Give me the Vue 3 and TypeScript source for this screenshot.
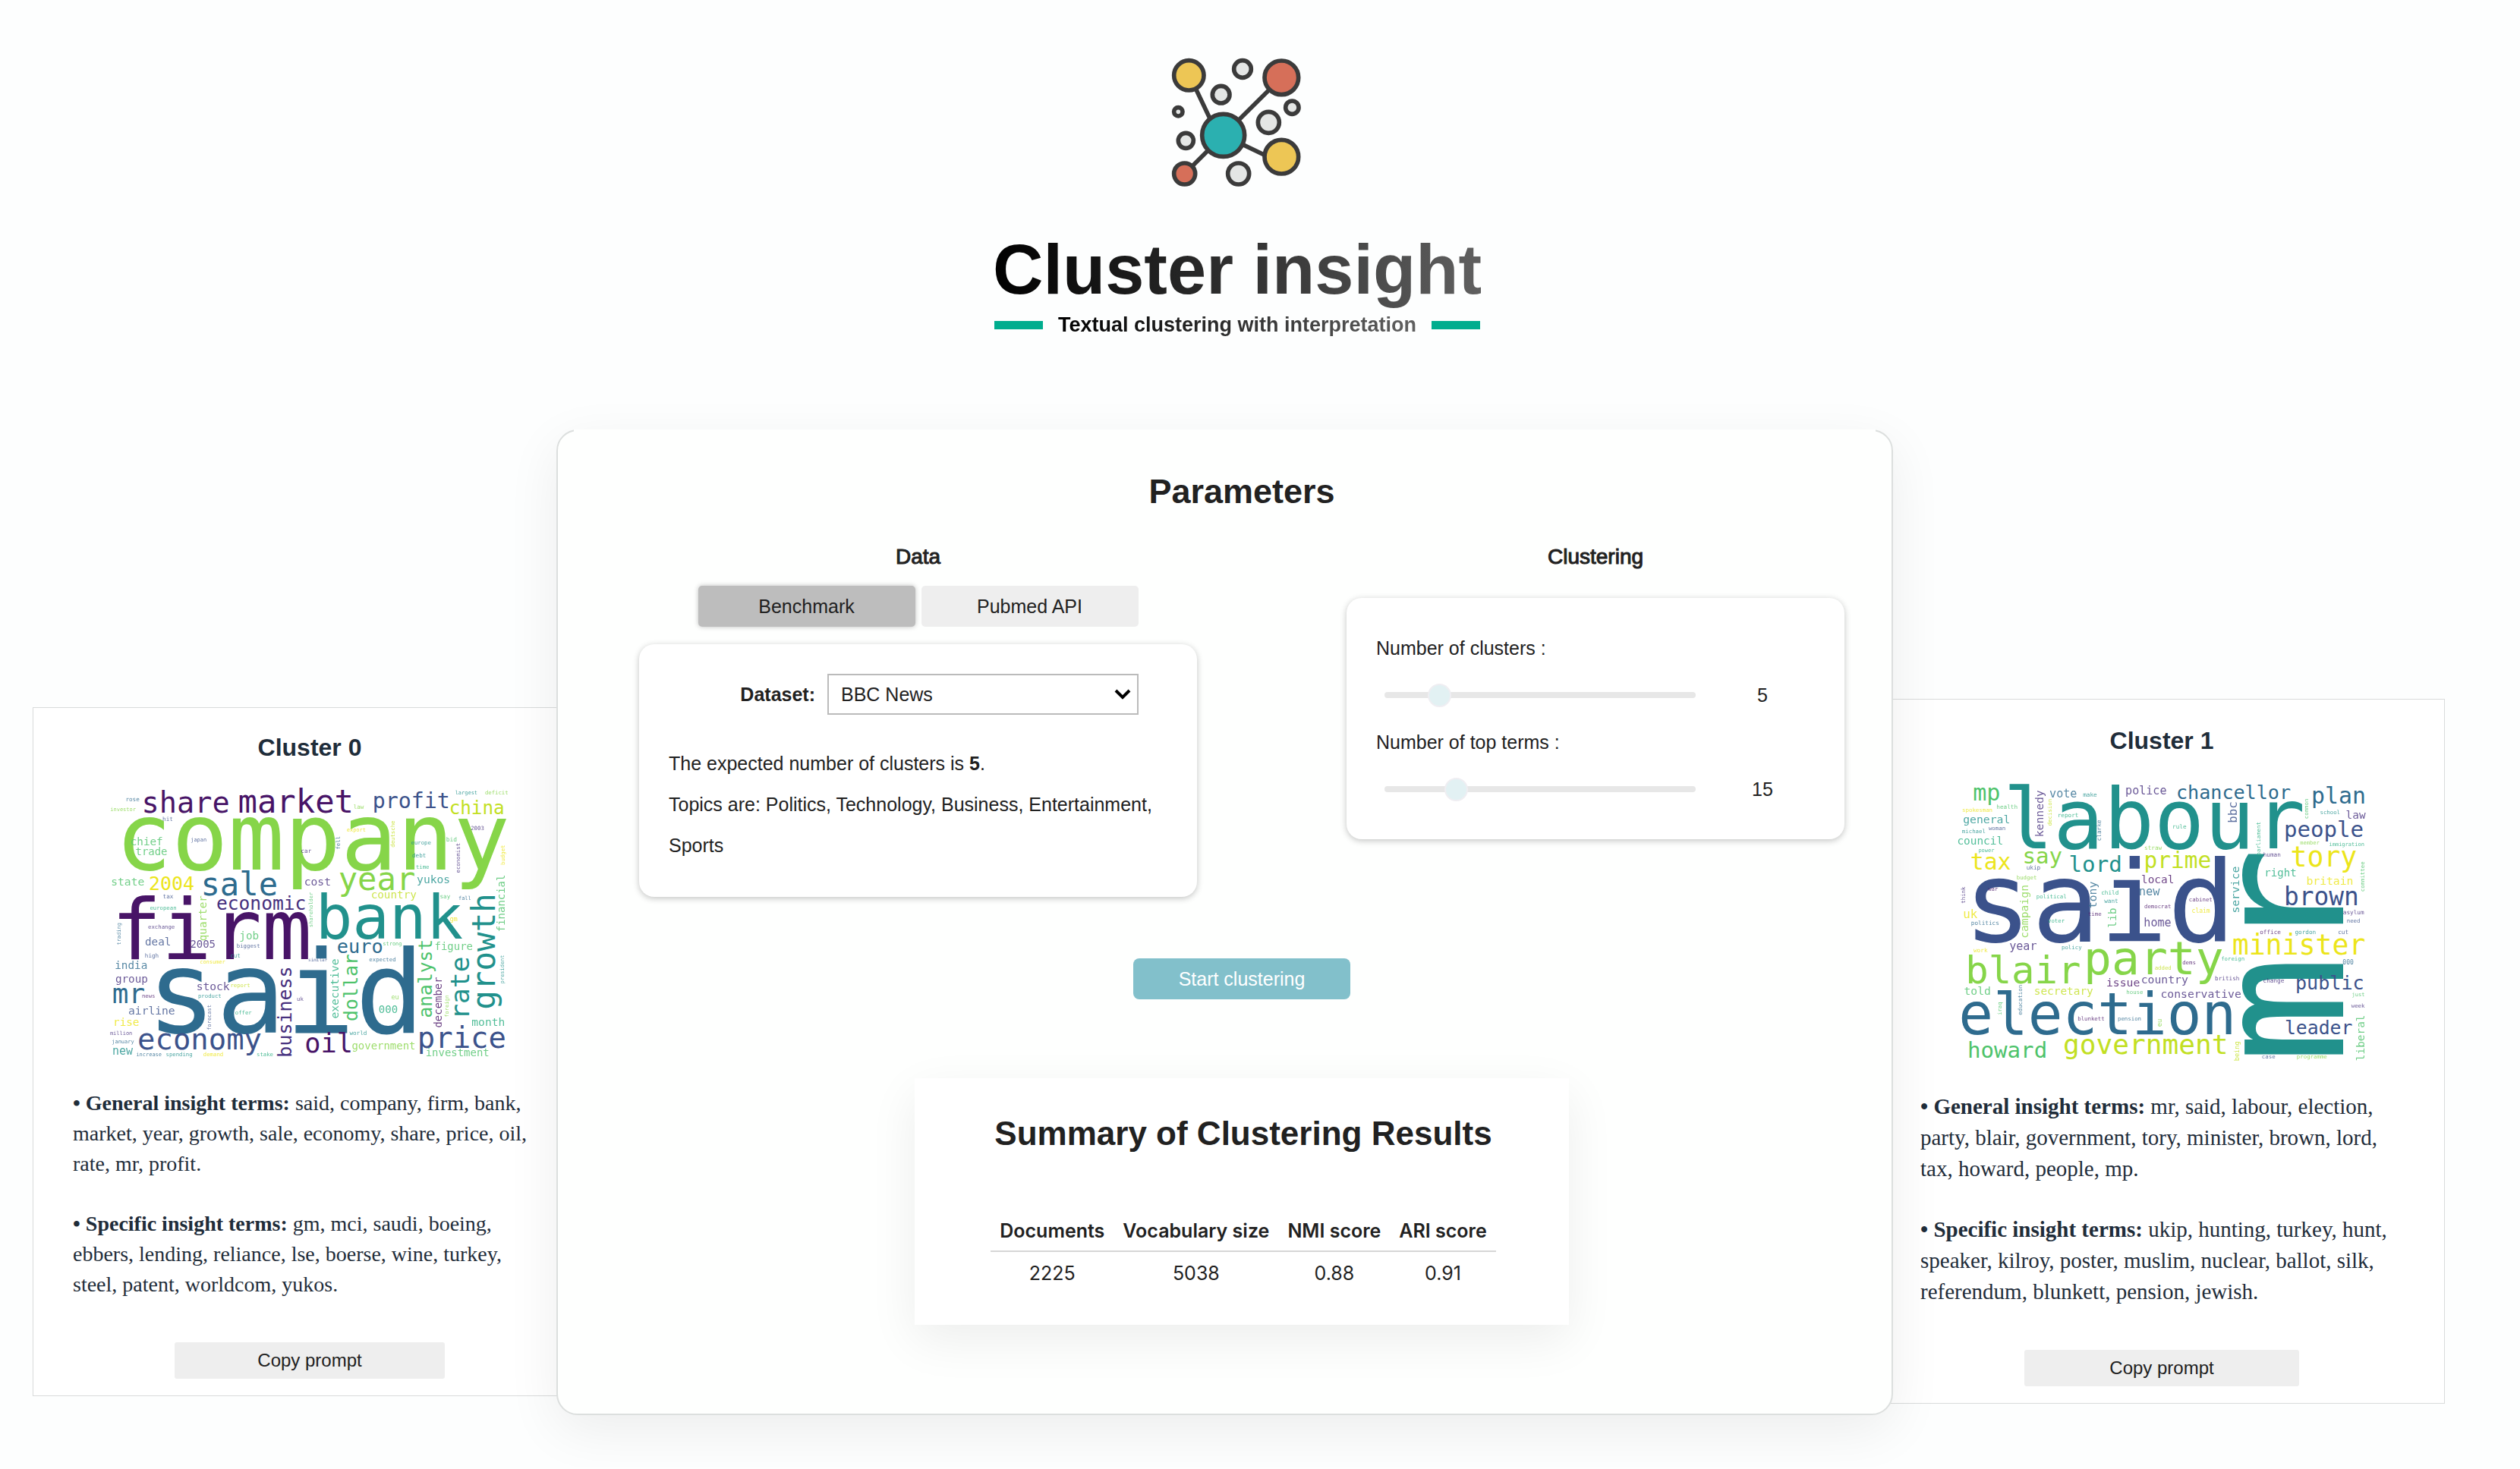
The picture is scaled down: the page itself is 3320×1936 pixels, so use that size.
<script setup lang="ts">
import { ref } from 'vue'

// Horizontal words: [text, left, right, baseline y, tone]
// Vertical words:   [text, top, bottom, baseline x, tone, true]
type Word = [string, number, number, number, string, boolean?]

interface Cluster {
  id: number
  width: number
  height: number
  words: Word[]
  general: string
  specific: string
}

const tones: Record<string, string> = {
  a: '#481467',
  b: '#46307e',
  c: '#3b528b',
  d: '#2e6b8e',
  e: '#21918c',
  f: '#28ae80',
  g: '#4ec36b',
  h: '#86d549',
  i: '#c2df23',
  j: '#ece51b',
}

// Advance of one monospace glyph, and the side bearings of a word, in em
const ADVANCE = 0.602
const BEARING = 0.12

function wordSize(w: Word): number {
  return Math.round((w[2] - w[1]) / (ADVANCE * w[0].length - BEARING))
}

function wordPlace(w: Word): string {
  const middle = (w[1] + w[2]) / 2
  return w[5] ? `translate(${w[3]} ${middle}) rotate(-90)` : `translate(${middle} ${w[3]})`
}

const clusters: Cluster[] = [
  {
    id: 0,
    width: 1670,
    height: 1170,
    general: 'said, company, firm, bank, market, year, growth, sale, economy, share, price, oil, rate, mr, profit.',
    specific: 'gm, mci, saudi, boeing, ebbers, lending, reliance, lse, boerse, wine, turkey, steel, patent, worldcom, yukos.',
    words: [
      ['company', 88, 1607, 380, 'h'], ['said', 218, 1263, 1024, 'd'], ['firm', 70, 825, 735, 'a'],
      ['bank', 873, 1430, 652, 'e'], ['share', 177, 512, 154, 'a'], ['market', 560, 1002, 154, 'a'],
      ['profit', 1090, 1386, 134, 'c'], ['china', 1392, 1604, 160, 'i'], ['sale', 412, 702, 480, 'd'],
      ['year', 957, 1247, 460, 'h'], ['2004', 203, 375, 460, 'j'], ['economic', 470, 818, 538, 'b'],
      ['growth', 480, 927, 1570, 'e', true], ['rate', 730, 967, 1467, 'e', true],
      ['business', 768, 1118, 765, 'b', true], ['economy', 160, 640, 1092, 'c'], ['oil', 822, 1001, 1104, 'a'],
      ['price', 1270, 1607, 1086, 'c'], ['analyst', 660, 962, 1319, 'g', true],
      ['dollar', 718, 975, 1024, 'g', true], ['mr', 60, 177, 908, 'd'], ['euro', 948, 1122, 710, 'd'],
      ['rose', 108, 160, 108, 'd'], ['investor', 48, 145, 146, 'h'], ['law', 1011, 1049, 138, 'h'],
      ['largest', 1413, 1500, 82, 'e'], ['deficit', 1532, 1621, 82, 'h'], ['hit', 254, 293, 186, 'c'],
      ['chief', 128, 252, 282, 'g'], ['trade', 148, 270, 322, 'g'], ['japan', 365, 427, 268, 'c'],
      ['car', 803, 841, 314, 'b'], ['state', 52, 178, 442, 'g'], ['cost', 817, 917, 442, 'b'],
      ['yukos', 1263, 1390, 434, 'e'], ['export', 983, 1058, 230, 'j'], ['fell', 248, 298, 957, 'd', true],
      ['deutsche', 186, 290, 1173, 'i', true], ['europe', 1239, 1315, 280, 'e'], ['debt', 1243, 1296, 332, 'e'],
      ['time', 1258, 1308, 376, 'f'], ['bid', 1378, 1418, 268, 'g'], ['economist', 276, 390, 1431, 'b', true],
      ['2003', 1475, 1526, 224, 'b'], ['budget', 282, 360, 1608, 'j', true], ['country', 1080, 1258, 494, 'i'],
      ['say', 1353, 1392, 494, 'g'], ['fall', 1426, 1475, 498, 'd'], ['financial', 400, 625, 1608, 'g', true],
      ['tax', 256, 294, 494, 'c'], ['european', 204, 307, 538, 'f'], ['quarter', 484, 660, 427, 'h', true],
      ['shareholder', 470, 606, 848, 'g', true], ['trading', 590, 678, 88, 'd', true],
      ['exchange', 197, 300, 612, 'b'], ['deal', 186, 284, 680, 'c'], ['2005', 365, 460, 690, 'b'],
      ['job', 560, 632, 655, 'g'], ['biggest', 548, 638, 690, 'c'], ['high', 184, 237, 728, 'c'],
      ['cut', 522, 561, 728, 'e'], ['consumer', 402, 500, 752, 'j'], ['similar', 831, 905, 742, 'c'],
      ['gm', 1392, 1420, 582, 'j'], ['strong', 1127, 1200, 680, 'g'], ['expected', 1073, 1176, 742, 'd'],
      ['figure', 1333, 1480, 698, 'g'], ['president', 718, 830, 1607, 'e', true], ['india', 67, 190, 774, 'd'],
      ['group', 68, 193, 826, 'b'], ['news', 172, 223, 888, 'a'], ['stock', 390, 516, 856, 'b'],
      ['report', 522, 600, 844, 'i'], ['product', 395, 485, 888, 'e'], ['uk', 786, 810, 900, 'b'],
      ['airline', 120, 300, 954, 'c'], ['forecast', 915, 1015, 445, 'c', true], ['offer', 542, 605, 952, 'f'],
      ['rise', 60, 158, 998, 'j'], ['executive', 735, 967, 950, 'f', true], ['000', 1112, 1182, 946, 'f'],
      ['eu', 1161, 1188, 892, 'h'], ['december', 806, 1004, 1358, 'a', true],
      ['foreign', 877, 963, 1387, 'h', true], ['million', 45, 133, 1034, 'b'], ['january', 52, 140, 1068, 'd'],
      ['new', 57, 133, 1112, 'e'], ['increase', 150, 248, 1118, 'd'], ['spending', 268, 370, 1118, 'e'],
      ['demand', 415, 493, 1118, 'j'], ['stake', 627, 690, 1118, 'f'], ['world', 995, 1061, 1034, 'e'],
      ['government', 1005, 1253, 1092, 'h'], ['month', 1480, 1607, 998, 'f'],
      ['investment', 1298, 1545, 1118, 'g'],
    ],
  },
  {
    id: 1,
    width: 1728,
    height: 1200,
    general: 'mr, said, labour, election, party, blair, government, tory, minister, brown, lord, tax, howard, people, mp.',
    specific: 'ukip, hunting, turkey, hunt, speaker, kilroy, poster, muslim, nuclear, ballot, silk, referendum, blunkett, pension, jewish.',
    words: [
      ['mr', 357, 1125, 1576, 'e', true], ['said', 110, 1127, 686, 'c'], ['labour', 258, 1408, 320, 'e'],
      ['election', 78, 1142, 1050, 'd'], ['party', 567, 1095, 816, 'h'], ['blair', 100, 535, 850, 'h'],
      ['government', 482, 1117, 1130, 'i'], ['howard', 103, 408, 1144, 'g'], ['tory', 1375, 1625, 392, 'j'],
      ['minister', 1147, 1657, 738, 'j'], ['brown', 1350, 1632, 542, 'c'], ['people', 1348, 1653, 274, 'c'],
      ['plan', 1457, 1660, 144, 'd'], ['chancellor', 923, 1367, 124, 'd'], ['leader', 1350, 1610, 1050, 'c'],
      ['public', 1392, 1655, 876, 'c'], ['lord', 502, 702, 412, 'e'], ['prime', 798, 1053, 398, 'i'],
      ['tax', 115, 265, 404, 'j'], ['say', 320, 467, 378, 'h'], ['mp', 125, 223, 132, 'g'],
      ['kennedy', 93, 273, 397, 'b', true], ['vote', 424, 527, 118, 'd'], ['make', 554, 607, 116, 'e'],
      ['police', 723, 879, 106, 'b'], ['spokesman', 80, 195, 176, 'j'], ['health', 215, 294, 164, 'g'],
      ['decision', 126, 230, 430, 'i', true], ['report', 455, 534, 196, 'f'], ['clarke', 208, 290, 624, 'd', true],
      ['general', 84, 264, 222, 'e'], ['woman', 183, 247, 248, 'c'], ['michael', 78, 169, 260, 'e'],
      ['council', 60, 237, 306, 'f'], ['power', 143, 203, 334, 'f'], ['rule', 906, 959, 242, 'f'],
      ['bbc', 138, 217, 1158, 'c', true], ['school', 1487, 1563, 184, 'e'], ['law', 1590, 1662, 202, 'b'],
      ['common', 125, 203, 1440, 'g', true], ['member', 1408, 1482, 306, 'h'],
      ['immigration', 1521, 1660, 312, 'f'], ['parliament', 217, 346, 1250, 'f', true],
      ['human', 1263, 1330, 352, 'b'], ['straw', 796, 862, 326, 'h'], ['ukip', 332, 384, 404, 'c'],
      ['local', 785, 909, 456, 'a'], ['right', 1270, 1390, 430, 'f'], ['britain', 1433, 1615, 464, 'j'],
      ['committee', 372, 490, 1660, 'g', true], ['asylum', 1577, 1658, 580, 'b'], ['need', 1592, 1642, 612, 'c'],
      ['budget', 293, 370, 442, 'h'], ['think', 472, 535, 90, 'b', true], ['war', 181, 218, 488, 'a'],
      ['campaign', 465, 672, 338, 'h', true], ['political', 370, 488, 516, 'f'],
      ['tony', 453, 553, 605, 'd', true], ['child', 626, 692, 502, 'f'], ['want', 638, 690, 534, 'e'],
      ['new', 775, 853, 504, 'd'], ['democrat', 795, 899, 554, 'a'], ['cabinet', 971, 1061, 528, 'a'],
      ['claim', 983, 1051, 574, 'j'], ['service', 393, 572, 1166, 'e', true], ['uk', 84, 135, 595, 'j'],
      ['politics', 115, 221, 620, 'd'], ['voter', 416, 480, 612, 'f'], ['time', 574, 625, 586, 'a'],
      ['lib', 556, 630, 684, 'g', true], ['home', 795, 898, 628, 'b'], ['year', 266, 369, 720, 'b'],
      ['policy', 470, 547, 718, 'e'], ['work', 124, 176, 730, 'j'], ['office', 1250, 1330, 658, 'a'],
      ['gordon', 1388, 1468, 658, 'e'], ['cut', 1558, 1596, 658, 'c'], ['foreign', 1098, 1187, 762, 'f'],
      ['000', 1576, 1616, 776, 'd'], ['dems', 945, 996, 776, 'a'], ['added', 836, 900, 796, 'i'],
      ['issue', 648, 774, 862, 'a'], ['country', 783, 965, 850, 'b'], ['british', 1074, 1167, 840, 'b'],
      ['change', 1263, 1343, 848, 'b'], ['just', 1612, 1660, 902, 'g'], ['told', 88, 188, 896, 'g'],
      ['secretary', 362, 592, 896, 'i'], ['house', 724, 789, 894, 'g'], ['conservative', 862, 1172, 908, 'b'],
      ['education', 858, 974, 313, 'd', true], ['iraq', 925, 975, 233, 'g', true],
      ['blunkett', 533, 637, 998, 'a'], ['pension', 690, 782, 998, 'd'], ['eu', 992, 1020, 862, 'h', true],
      ['week', 1610, 1660, 946, 'b'], ['liberal', 978, 1153, 1660, 'g', true],
      ['being', 1080, 1155, 1168, 'i', true], ['case', 1258, 1308, 1148, 'c'],
      ['programme', 1395, 1512, 1148, 'h'],
    ],
  },
]

const source = ref<'benchmark' | 'pubmed'>('benchmark')
const dataset = ref('BBC News')
const clusterCount = ref(5)
const termCount = ref(15)

function copyPrompt(c: Cluster): void {
  navigator.clipboard?.writeText(`${c.general} ${c.specific}`)
}
</script>

<template>
  <div class="page">
    <header class="brand">
      <svg class="brand-icon" viewBox="0 0 660 600" aria-hidden="true">
        <g stroke="#3b3b3b" stroke-width="17">
          <path d="M142 120 240 326M275 355 505 127M505 465 290 362M275 355 122 507" fill="none" />
          <circle cx="139" cy="118" r="59" fill="#edc655" />
          <circle cx="505" cy="127" r="67" fill="#d66f59" />
          <circle cx="505" cy="440" r="67" fill="#edc655" />
          <circle cx="122" cy="507" r="42" fill="#d66f59" />
          <circle cx="275" cy="355" r="84" fill="#2bb0b0" />
          <g fill="#e4e6e5">
            <circle cx="351" cy="93" r="34" />
            <circle cx="266" cy="194" r="34" />
            <circle cx="97" cy="262" r="17" />
            <circle cx="547" cy="245" r="26" />
            <circle cx="454" cy="304" r="42" />
            <circle cx="127" cy="376" r="30" />
            <circle cx="335" cy="507" r="42" />
          </g>
        </g>
      </svg>
      <h1>Cluster insight</h1>
      <p class="tagline"><span>Textual clustering with interpretation</span></p>
    </header>

    <div class="board">
      <section v-for="c in clusters" :key="c.id" class="cluster" :class="`cluster-${c.id}`">
        <h2>Cluster {{ c.id }}</h2>
        <svg class="cloud" :viewBox="`0 0 ${c.width} ${c.height}`">
          <text
            v-for="(w, i) in c.words"
            :key="i"
            :transform="wordPlace(w)"
            :font-size="wordSize(w)"
            :fill="tones[w[4]]"
            :class="{ faint: wordSize(w) < 50 }"
          >{{ w[0] }}</text>
        </svg>
        <div class="terms">
          <p><strong>• General insight terms:</strong> {{ c.general }}</p>
          <p><strong>• Specific insight terms:</strong> {{ c.specific }}</p>
        </div>
        <button class="copy" type="button" @click="copyPrompt(c)">Copy prompt</button>
      </section>

      <main class="panel">
        <h2 class="panel-title">Parameters</h2>
        <div class="columns">
          <section class="data">
            <h3>Data</h3>
            <div class="tabs">
              <button type="button" :class="{ active: source === 'benchmark' }" @click="source = 'benchmark'">Benchmark</button>
              <button type="button" :class="{ active: source === 'pubmed' }" @click="source = 'pubmed'">Pubmed API</button>
            </div>
            <div class="box data-box">
              <div class="field">
                <label for="dataset">Dataset:</label>
                <div class="select">
                  <select id="dataset" v-model="dataset">
                    <option>BBC News</option>
                  </select>
                  <svg viewBox="0 0 22 14" aria-hidden="true"><path d="M2 2l9 9 9-9" fill="none" stroke="#000" stroke-width="4" /></svg>
                </div>
              </div>
              <p>The expected number of clusters is <strong>5</strong>.<br />Topics are: Politics, Technology, Business, Entertainment, Sports</p>
            </div>
          </section>
          <section class="clustering">
            <h3>Clustering</h3>
            <div class="box sliders">
              <label for="clusters">Number of clusters :</label>
              <div class="slider">
                <input id="clusters" v-model.number="clusterCount" type="range" min="2" max="22" />
                <output for="clusters">{{ clusterCount }}</output>
              </div>
              <label for="terms">Number of top terms :</label>
              <div class="slider">
                <input id="terms" v-model.number="termCount" type="range" min="5" max="53" />
                <output for="terms">{{ termCount }}</output>
              </div>
            </div>
          </section>
        </div>
        <button class="start" type="button">Start clustering</button>
        <section class="summary">
          <h2>Summary of Clustering Results</h2>
          <table>
            <thead>
              <tr><th>Documents</th><th>Vocabulary size</th><th>NMI score</th><th>ARI score</th></tr>
            </thead>
            <tbody>
              <tr><td>2225</td><td>5038</td><td>0.88</td><td>0.91</td></tr>
            </tbody>
          </table>
        </section>
      </main>
    </div>
  </div>
</template>

<style>
body {
  background: #fdfefe;
}
</style>

<style scoped>
.page {
  font-family: "Liberation Sans", Arial, sans-serif;
  font-size: 25px;
  color: #212121;
  padding-bottom: 68px;
}

h1, h2, h3, p {
  margin: 0;
}

button, select {
  font: inherit;
  color: inherit;
  border: 0;
  cursor: pointer;
}

/* Logo */
.brand {
  display: flex;
  flex-direction: column;
  align-items: center;
  padding: 60px 60px 122px 0;
}

.brand-icon {
  width: 220px;
  height: 200px;
  margin-bottom: 43px;
}

.brand h1,
.tagline span {
  background: linear-gradient(90deg, #000, #606060);
  background-clip: text;
  color: transparent;
}

.brand h1 {
  font-size: 92px;
  line-height: 104px;
}

.tagline {
  display: flex;
  align-items: center;
  gap: 20px;
  margin-top: 5px;
  font-size: 27px;
  font-weight: bold;
  line-height: 32px;
}

.tagline::before,
.tagline::after {
  content: "";
  width: 64px;
  height: 11px;
  background: #00ad8e;
}

/* Board: the panel overlaps the inner edges of both cluster cards */
.board {
  display: grid;
  grid-template-columns: 690fr 1761fr 727fr;
  align-items: start;
  padding: 0 99px 0 43px;
}

.cluster {
  grid-row: 1;
  box-sizing: border-box;
  display: flex;
  flex-direction: column;
  align-items: center;
  border: 1px solid #d9dbdb;
  background: #fff;
  color: #1f2d3a;
}

.cluster-0 {
  grid-column: 1;
  margin: 366px -40px 0 0;
  padding: 34px 52px 22px;
  font-size: 28px;
  line-height: 40px;
}

.cluster-1 {
  grid-column: 3;
  margin: 355px 0 0 -19px;
  padding: 36px 54px 22px;
  font-size: 29px;
  line-height: 41px;
}

.cluster h2 {
  font-size: 32px;
  line-height: 36px;
  margin-bottom: 17px;
}

.cloud {
  width: 89%;
  height: auto;
  overflow: visible;
  font-family: "DejaVu Sans Mono", monospace;
  text-anchor: middle;
}

.cluster-1 .cloud {
  width: 91%;
}

.cloud .faint {
  opacity: 0.8;
}

.terms {
  align-self: stretch;
  display: flex;
  flex-direction: column;
  gap: 39px;
  margin: 25px 0 56px;
  font-family: "Liberation Serif", "Times New Roman", serif;
}

.copy {
  width: 57%;
  height: 48px;
  background: #eee;
  color: #212121;
  border-radius: 3px;
  font-size: 24px;
}

.panel {
  grid-row: 1;
  grid-column: 2;
  position: relative;
  padding: 51px 62px 117px 107px;
  display: flex;
  flex-direction: column;
  align-items: center;
  border: 2px solid #dcdfde;
  border-radius: 28px;
  background: #fefffe;
  box-shadow: 0 20px 70px rgba(0, 0, 0, 0.07);
}

/* The top edge stays open between the two corners */
.panel::before {
  content: "";
  position: absolute;
  inset: -2px 21px auto;
  height: 4px;
  background: #fefffe;
}

.panel-title {
  font-size: 45px;
  line-height: 58px;
  margin-bottom: 41px;
}

.columns {
  align-self: stretch;
  display: grid;
  grid-template-columns: 735fr 656fr;
  align-items: start;
  gap: 197px;
}

h3 {
  font-size: 28px;
  font-weight: normal;
  line-height: 32px;
  text-align: center;
  -webkit-text-stroke: 1px currentColor;
}

.tabs {
  display: flex;
  justify-content: center;
  gap: 8px;
  margin: 22px 0 23px;
}

.tabs button,
.start {
  width: 286px;
  height: 54px;
  border-radius: 5px;
  background: #eee;
}

.tabs .active {
  background: #bdbdbd;
  box-shadow: 0 0 6px rgba(0, 0, 0, 0.25);
}

.box {
  border-radius: 20px;
  background: #fff;
  box-shadow: 0 2px 9px rgba(0, 0, 0, 0.24);
}

.data-box {
  padding: 39px 39px 41px;
}

.data-box p {
  margin-top: 37px;
  line-height: 54px;
}

.field {
  display: flex;
  justify-content: flex-end;
  align-items: center;
  gap: 16px;
  padding-right: 38px;
}

.field label {
  font-weight: bold;
}

.select {
  position: relative;
  width: 410px;
}

.select select {
  display: block;
  width: 100%;
  height: 54px;
  padding: 0 16px;
  border: 2px solid #bbb;
  background: #fff;
  appearance: none;
}

.select svg {
  position: absolute;
  right: 10px;
  top: 20px;
  width: 22px;
  height: 14px;
  pointer-events: none;
}

.sliders {
  margin-top: 38px;
  padding: 35px 20px 35px 39px;
  line-height: 62px;
}

.sliders label {
  display: block;
}

.slider {
  display: flex;
  align-items: center;
  height: 62px;
}

.slider input {
  appearance: none;
  width: 410px;
  height: 8px;
  margin: 0 0 0 11px;
  border-radius: 4px;
  background: #e7e7e7;
}

.slider input::-webkit-slider-thumb {
  appearance: none;
  box-sizing: border-box;
  width: 31px;
  height: 31px;
  border: 2px solid #efeef2;
  border-radius: 50%;
  background: #e2f1f3;
}

.slider output {
  flex: 1;
  text-align: center;
}

.start {
  margin: 81px 0 104px;
  border-radius: 8px;
  background: #82c0cb;
  color: #fff;
}

.summary {
  padding: 47px 96px 52px 100px;
  background: #fff;
  box-shadow: 0 20px 60px rgba(0, 0, 0, 0.07);
}

.summary h2 {
  font-size: 44px;
  line-height: 52px;
  text-align: center;
  margin-bottom: 86px;
}

table {
  border-collapse: collapse;
  margin: 0 auto;
  font-family: Inter, sans-serif;
  font-size: 25px;
  line-height: 32px;
  text-align: center;
}

th {
  padding: 0 12px 10px;
  border-bottom: 2px solid #d6d6d6;
  font-weight: 600;
}

td {
  padding: 12px 12px 0;
}
</style>
